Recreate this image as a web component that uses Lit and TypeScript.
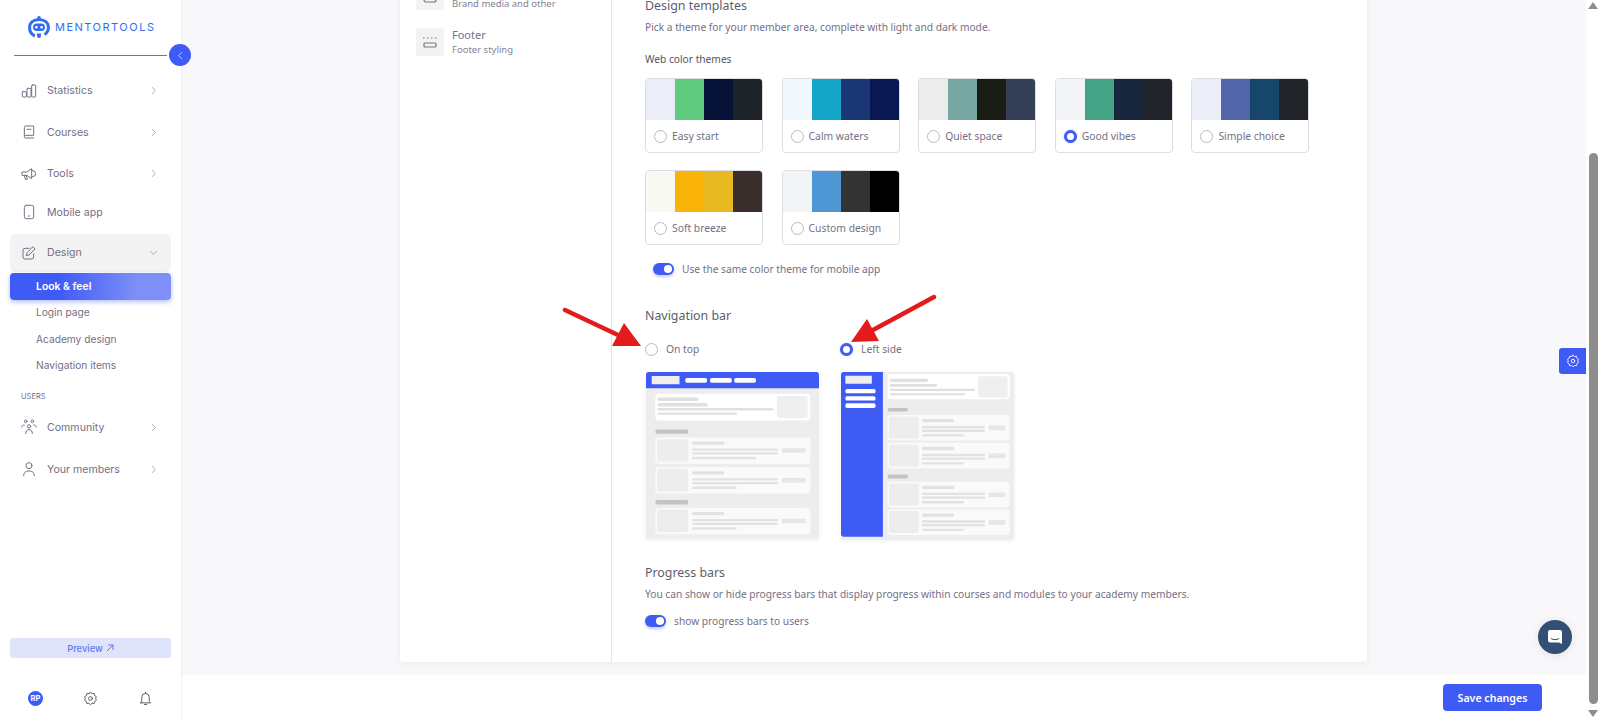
import {css, html, LitElement, svg} from 'lit';
import {customElement, state} from 'lit/decorators.js';
import {classMap} from 'lit/directives/class-map.js';

const THEMES = [
  {name: 'Easy start', colors: ['#ebeef7', '#5fcb7f', '#08133a', '#1f2429']},
  {name: 'Calm waters', colors: ['#f3f7fe', '#15a6ca', '#1a3675', '#091852']},
  {name: 'Quiet space', colors: ['#ececec', '#78a7a3', '#1a1d14', '#354058']},
  {name: 'Good vibes', colors: ['#f3f4f7', '#44a285', '#17263c', '#212529']},
  {name: 'Simple choice', colors: ['#ebeef7', '#5066a8', '#17466b', '#212529']},
  {name: 'Soft breeze', colors: ['#f8f9f3', '#f9b208', '#e8b923', '#3a2e2c']},
  {name: 'Custom design', colors: ['#f3f4f6', '#4f96d5', '#333333', '#000000']},
];

const icon = (body: unknown, size = 16) => html`<svg width=${size} height=${size} viewBox="0 0 24 24" fill="none" stroke="currentColor" stroke-width="1.5" stroke-linecap="round" stroke-linejoin="round">${body}</svg>`;

const ICONS = {
  stats: svg`<rect x="2" y="13" width="6" height="8" rx="1"/><rect x="9" y="8" width="6" height="13" rx="1"/><rect x="16" y="3" width="6" height="18" rx="1"/>`,
  book: svg`<path d="M5 18V5a2 2 0 0 1 2-2h12v14H7a2 2 0 0 0-2 2 2 2 0 0 0 2 2h12"/><path d="M9 8h6"/>`,
  megaphone: svg`<path d="M2 9h7l7-5v15l-7-5H2z"/><path d="M5 14l1.500 6h3L8 14"/><path d="M16 6l5 2.500 1 3-1 3-5 2"/>`,
  phone: svg`<rect x="5" y="2" width="14" height="20" rx="3"/><path d="M11 18h2"/>`,
  edit: svg`<path d="M12 5H6a3 3 0 0 0-3 3v10a3 3 0 0 0 3 3h10a3 3 0 0 0 3-3v-5"/><path d="M18 3l3 3-9 9-4 1 1-4z"/>`,
  community: svg`<circle cx="12" cy="11" r="2.500"/><path d="M7 22c0-4 2-6 5-6s5 2 5 6"/><circle cx="7" cy="3.500" r="2"/><circle cx="17" cy="3.500" r="2"/><path d="M1 12c0-2 2-3 4-3M23 12c0-2-2-3-4-3"/>`,
  user: svg`<circle cx="12" cy="7" r="4.500"/><path d="M4 22c0-5 3-7 8-7s8 2 8 7"/>`,
  gear: svg`<circle cx="12" cy="12" r="3"/><path d="M12 2l2.500 2.300 3.400-.3.800 3.300 2.800 2-1.400 2.700 1.400 2.700-2.800 2-.8 3.300-3.400-.3L12 22l-2.500-2.300-3.400.3-.8-3.300-2.800-2L3.900 12 2.500 9.300l2.800-2 .8-3.300 3.400.3z"/>`,
  bell: svg`<path d="M6 17V10a6 6 0 0 1 12 0v7l2 2H4z"/><path d="M10 21.500h4"/><path d="M12 2v2"/>`,
  right: svg`<path d="M9 5l7 7-7 7"/>`,
  down: svg`<path d="M5 9l7 7 7-7"/>`,
  left: svg`<path d="M15 5l-7 7 7 7"/>`,
};

// viewBox units are the 3x crop of the mock, which keeps the numbers easy to compare
const bar = (x1: number, x2: number, y1: number, y2: number, fill: string) =>
  svg`<rect x=${x1} y=${y1} width=${x2 - x1} height=${y2 - y1} rx=${Math.min(5, (y2 - y1) / 2)} fill=${fill}/>`;

const block = (x1: number, x2: number, y1: number, y2: number, fill: string, rx = 7) =>
  svg`<rect x=${x1} y=${y1} width=${x2 - x1} height=${y2 - y1} rx=${rx} fill=${fill}/>`;

const rowTop = (y: number, h: number, x1: number, x2: number, tx1: number, tx2: number, lx1: number, lx2: number, sx1: number, sx2: number, short: number) => svg`
  ${block(x1, x2, y, y + h, '#fafafa', 10)}
  ${block(tx1, tx2, y + 5, y + h - 6, '#ededed')}
  ${bar(lx1, lx1 + 97, y + 12, y + 22, '#e2e2e2')}
  ${bar(lx1, lx2, y + 33, y + 40, '#e2e2e2')}
  ${bar(lx1, lx2, y + 44, y + 51, '#e2e2e2')}
  ${bar(lx1, short, y + 58, y + 65, '#e2e2e2')}
  ${block(sx1, sx2, y + 32, y + 46, '#e6e6e6', 2)}
`;

const topPreview = html`<svg class="preview" width="173" height="167" viewBox="290 278 516 500" preserveAspectRatio="none">
  <rect x="290" y="278" width="516" height="500" rx="8" fill="#ededed"/>
  <path d="M290 327V286a8 8 0 0 1 8-8h500a8 8 0 0 1 8 8v41z" fill="#3f5bf6"/>
  ${block(307, 390, 290, 315, '#eeeeee', 2)}
  ${bar(407, 472, 296, 310, '#fff')}${bar(481, 546, 296, 310, '#fff')}${bar(553, 618, 296, 310, '#fff')}
  ${block(318, 780, 343, 423, '#ffffff', 10)}
  ${block(681, 772, 350, 416, '#efefef')}
  ${bar(324, 446, 354, 365, '#e0e0e0')}${bar(324, 474, 371, 381, '#e0e0e0')}
  ${bar(324, 670, 386, 393, '#e0e0e0')}${bar(324, 562, 399, 406, '#e0e0e0')}
  ${bar(318, 416, 450, 463, '#c4c4c4')}
  ${rowTop(474, 79, 318, 780, 323, 416, 427, 684, 695, 766, 619)}
  ${rowTop(563, 79, 318, 780, 323, 416, 427, 684, 695, 766, 560)}
  ${bar(318, 416, 661, 675, '#c4c4c4')}
  ${rowTop(685, 79, 318, 780, 323, 416, 427, 684, 695, 766, 560)}
</svg>`;

const sidePreview = html`<svg class="preview" width="173" height="168" viewBox="65 278 516 505" preserveAspectRatio="none">
  <rect x="65" y="278" width="516" height="505" rx="8" fill="#ededed"/>
  <path d="M190 773H73a8 8 0 0 1-8-8V286a8 8 0 0 1 8-8h117z" fill="#3f5bf6"/>
  ${block(78, 157, 289, 313, '#eeeeee', 2)}
  ${bar(78, 168, 329, 342, '#fff')}${bar(78, 168, 351, 364, '#fff')}${bar(78, 168, 372, 386, '#fff')}
  ${block(204, 568, 284, 360, '#ffffff', 10)}
  ${block(474, 562, 291, 355, '#efefef')}
  ${bar(210, 325, 298, 308, '#e0e0e0')}${bar(210, 352, 314, 322, '#e0e0e0')}
  ${bar(210, 465, 328, 335, '#e0e0e0')}${bar(210, 435, 342, 348, '#e0e0e0')}
  ${bar(204, 265, 386, 397, '#c4c4c4')}
  ${rowTop(407, 77, 204, 568, 208, 297, 306, 495, 505, 555, 432)}
  ${rowTop(491, 77, 204, 568, 208, 297, 306, 495, 505, 555, 432)}
  ${bar(204, 265, 586, 598, '#c4c4c4')}
  ${rowTop(608, 77, 204, 568, 208, 297, 306, 495, 505, 555, 432)}
  ${rowTop(691, 77, 204, 568, 208, 297, 306, 495, 505, 555, 432)}
</svg>`;

@customElement('app-root')
export class AppRoot extends LitElement {
  @state() private theme = 'Good vibes';
  @state() private nav = 'left';

  static override styles = css`
    :host {
      display: flex;
      width: 1600px;
      height: 718px;
      overflow: hidden;
      position: relative;
      background: #f8f8fb;
      font-family: 'Noto Sans', sans-serif;
      color: #737085;
    }
    .sidebar {
      width: 182px;
      box-sizing: border-box;
      flex: none;
      background: #fff;
      border-right: 1px solid #f0f0f4;
      display: flex;
      flex-direction: column;
      font-family: Inter, sans-serif;
      font-size: 10.6px;
      color: #737085;
    }
    .logo {
      height: 55px;
      margin: 0 14px;
      padding-left: 14px;
      border-bottom: 1px solid #77757f;
      display: flex;
      align-items: flex-start;
      position: relative;
    }
    .logo-mark { margin-top: 16px; flex: none; }
    .logo-text {
      margin: 20px 0 0 5px;
      font-size: 11px;
      font-weight: 400;
      letter-spacing: 1.5px;
      line-height: 14px;
      color: #2f6ef0;
    }
    .collapse {
      position: absolute;
      right: -24px;
      top: 44px;
      width: 22px;
      height: 22px;
      border-radius: 50%;
      background: #3f5bf6;
      color: #fff;
      display: flex;
      align-items: center;
      justify-content: center;
      z-index: 2;
    }
    .menu { padding: 14px 10px 0; display: flex; flex-direction: column; flex: 1; }
    .item {
      height: 41.5px;
      display: flex;
      align-items: center;
      padding: 0 12px 0 11px;
      gap: 10px;
      flex: none;
    }
    .item .label { flex: 1; }
    .item .chev { color: #8b8a98; display: flex; }
    .item.short { height: 35px; }
    .item.open { background: #f3f3f3; border-radius: 5px; height: 38.5px; margin-top: 4px; }
    .sub-active {
      margin-top: 1px;
      height: 26.5px;
      border-radius: 4px;
      background: linear-gradient(90deg, #3f5bf6 30%, #7e90f8 80%);
      box-shadow: 0 2px 5px rgba(63, 91, 246, 0.4);
      color: #fff;
      font-weight: 600;
      font-size: 10.4px;
      display: flex;
      align-items: center;
      padding-left: 26px;
    }
    .sub {
      height: 26.7px;
      display: flex;
      align-items: center;
      padding-left: 26px;
      font-size: 10.2px;
    }
    .sub-active + .sub { margin-top: -1px; }
    .group {
      font-size: 7.5px;
      padding-left: 11px;
      margin-top: 10px;
      margin-bottom: 2px;
      line-height: 16px;
    }
    .item.community { margin-bottom: 0.5px; }
    .preview-btn {
      margin-top: auto;
      height: 20px;
      border-radius: 3px;
      background: #e0e4fb;
      color: #6177f0;
      font-weight: 500;
      font-size: 9.4px;
      display: flex;
      align-items: center;
      justify-content: center;
      gap: 3px;
    }
    .tools {
      height: 60px;
      box-sizing: border-box;
      padding: 20px 28px 0;
      display: flex;
      align-items: center;
      justify-content: space-between;
      color: #55535f;
    }
    .tools svg { display: block; }
    .avatar {
      width: 15px;
      height: 15px;
      border-radius: 50%;
      background: #3f5bf6;
      color: #fff;
      font-size: 7.5px;
      font-weight: 700;
      display: flex;
      align-items: center;
      justify-content: center;
    }
    .main { flex: 1; display: flex; flex-direction: column; min-width: 0; }
    .scroll { flex: 1; overflow: hidden; }
    .footer {
      height: 43px;
      flex: none;
      background: #fff;
      display: flex;
      align-items: center;
      justify-content: flex-end;
      padding-right: 44px;
      padding-top: 2px;
      box-sizing: border-box;
    }
    .save {
      width: 99px;
      height: 27px;
      border-radius: 4px;
      background: #3f5bf6;
      color: #fff;
      font-size: 10.6px;
      font-weight: 600;
      display: flex;
      align-items: center;
      justify-content: center;
    }
    .card {
      width: 967px;
      margin: -30px 0 0 218px;
      background: #fff;
      border-radius: 4px;
      box-shadow: 0 1px 6px rgba(60, 60, 90, 0.08);
      display: flex;
    }
    .left {
      flex: none;
      border-right: 1px solid #e6e6ea;
      padding: 12px 0 0 16px;
      width: 195px;
    }
    .nav-item { display: flex; gap: 8px; height: 28px; margin-bottom: 18px; }
    .tile {
      width: 28px;
      height: 28px;
      border-radius: 3px;
      background: #f3f3f3;
      color: #77757f;
      display: flex;
      align-items: center;
      justify-content: center;
      flex: none;
    }
    .nav-name { font-size: 11px; line-height: 14px; }
    .nav-sub { font-size: 9.5px; line-height: 14px; margin-top: 1px; color: #85838f; }
    .right { flex: 1; padding: 27px 0 34px 33px; }
    h2 {
      margin: 0;
      font-size: 12.4px;
      font-weight: 400;
      line-height: 18px;
      color: #5f5d6d;
    }
    p { margin: 4px 0 0; font-size: 10.2px; line-height: 16px; color: #737085; }
    .sub-title { margin-top: 16px; font-size: 10.2px; line-height: 16px; color: #55535f; }
    .themes {
      display: grid;
      grid-template-columns: repeat(5, 118px);
      column-gap: 18.6px;
      row-gap: 17px;
      margin-top: 11px;
    }
    .theme {
      height: 75px;
      box-sizing: border-box;
      border: 1px solid #dedee2;
      border-radius: 4px;
      overflow: hidden;
      cursor: pointer;
    }
    .swatches { display: flex; height: 41px; }
    .swatches span { flex: 1; }
    .theme-label {
      display: flex;
      align-items: center;
      gap: 5px;
      height: 32px;
      padding-left: 8px;
      font-size: 10.3px;
    }
    .radio {
      width: 13px;
      height: 13px;
      box-sizing: border-box;
      border-radius: 50%;
      border: 1px solid #b9b9c0;
      background: #fff;
      flex: none;
    }
    .radio.on { border: 3.5px solid #3f5bf6; box-shadow: 0 0 2px rgba(63, 91, 246, 0.4); }
    .toggle-row {
      display: flex;
      align-items: center;
      gap: 8px;
      font-size: 10.2px;
      height: 14px;
    }
    .toggle {
      width: 21px;
      height: 12px;
      border-radius: 6px;
      background: #3f5bf6;
      box-shadow: 0 2px 3px rgba(63, 91, 246, 0.3);
      position: relative;
      flex: none;
    }
    .toggle::after {
      content: '';
      position: absolute;
      right: 2px;
      top: 2px;
      width: 8px;
      height: 8px;
      border-radius: 50%;
      background: #fff;
    }
    .same { margin: 17px 0 0 8px; }
    .nav-title { margin-top: 31px; }
    .nav-options { display: flex; margin-top: 16px; gap: 23px; }
    .nav-option { width: 172px; cursor: pointer; }
    .nav-head {
      display: flex;
      align-items: center;
      gap: 8px;
      font-size: 10.3px;
      height: 16px;
      margin-bottom: 15px;
    }
    .preview { display: block; margin-left: 1px; filter: drop-shadow(0 1px 2px rgba(0, 0, 0, 0.06)); }
    .progress-title { margin-top: 24px; }
    .progress-row { margin: 12px 0 0; }
    .bar-track {
      width: 14px;
      flex: none;
      background: #fff;
      display: flex;
      flex-direction: column;
      align-items: center;
    }
    .bar-gap { height: 142px; flex: none; }
    .bar-thumb { width: 9px; flex: 1; background: #8d8d8d; border-radius: 5px; }
    .arrow-up, .arrow-down {
      width: 0;
      height: 0;
      border-left: 5px solid transparent;
      border-right: 5px solid transparent;
      margin: 2px 0;
    }
    .arrow-up { border-bottom: 7px solid #8d8d8d; }
    .arrow-down { border-top: 7px solid #8d8d8d; margin: 6px 0 1px; }
    .gear-tab {
      position: absolute;
      left: 1559px;
      top: 348px;
      width: 27px;
      height: 26px;
      border-radius: 3px 0 0 3px;
      background: #3f5bf6;
      color: #fff;
      display: flex;
      align-items: center;
      justify-content: center;
    }
    .chat {
      position: absolute;
      left: 1538px;
      top: 620px;
      width: 34px;
      height: 34px;
      border-radius: 50%;
      background: #334f75;
      box-shadow: 0 1px 8px rgba(0, 0, 0, 0.1);
      display: flex;
      align-items: center;
      justify-content: center;
    }
    .arrows { position: absolute; left: 0; top: 0; pointer-events: none; }
  `;

  private renderTheme(t: {name: string; colors: string[]}) {
    return html`<div class="theme" @click=${() => (this.theme = t.name)}>
      <div class="swatches">${t.colors.map(c => html`<span style="background:${c}"></span>`)}</div>
      <div class="theme-label">
        <span class=${classMap({radio: true, on: this.theme === t.name})}></span>${t.name}
      </div>
    </div>`;
  }

  private renderSidebar() {
    const chev = html`<span class="chev">${icon(ICONS.right, 11)}</span>`;
    return html`<aside class="sidebar">
      <div class="logo">
        <svg class="logo-mark" width="22" height="22" viewBox="0 0 22 22">
          <path d="M6 19.500C3 18 1.600 15 1.600 11.500 1.600 6.500 5.500 3.400 11 3.400s9.400 3.100 9.400 8.100c0 3-1.400 5.500-3.900 7" fill="none" stroke="#2f6ef0" stroke-width="3"/>
          <rect x="9.200" y="0" width="3.600" height="5" rx="1.800" fill="#2f6ef0"/>
          <rect x="5" y="7.500" width="12" height="7.500" rx="3.700" fill="#2f6ef0"/>
          <circle cx="8.400" cy="11.200" r="1.300" fill="#fff"/><circle cx="13.600" cy="11.200" r="1.300" fill="#fff"/>
          <path d="M3 17l3 5 1.500-3.500z" fill="#2f6ef0"/>
          <path d="M9 17.500h4v2.500a2 2 0 0 1-4 0z" fill="#2f6ef0"/>
        </svg>
        <span class="logo-text">MENTORTOOLS</span>
        <span class="collapse">${icon(ICONS.left, 11)}</span>
      </div>
      <nav class="menu">
        <div class="item">${icon(ICONS.stats)}<span class="label">Statistics</span>${chev}</div>
        <div class="item">${icon(ICONS.book)}<span class="label">Courses</span>${chev}</div>
        <div class="item">${icon(ICONS.megaphone)}<span class="label">Tools</span>${chev}</div>
        <div class="item short">${icon(ICONS.phone)}<span class="label">Mobile app</span></div>
        <div class="item open">${icon(ICONS.edit)}<span class="label">Design</span><span class="chev">${icon(ICONS.down, 11)}</span></div>
        <div class="sub-active">Look &amp; feel</div>
        <div class="sub">Login page</div>
        <div class="sub">Academy design</div>
        <div class="sub">Navigation items</div>
        <div class="group">USERS</div>
        <div class="item community">${icon(ICONS.community)}<span class="label">Community</span>${chev}</div>
        <div class="item">${icon(ICONS.user)}<span class="label">Your members</span>${chev}</div>
        <div class="preview-btn">Preview
          <svg width="8" height="8" viewBox="0 0 8 8" fill="none" stroke="currentColor" stroke-width="1"><path d="M1 7l6-6M2 1h5v5"/></svg>
        </div>
      </nav>
      <div class="tools">
        <span class="avatar">RP</span>
        ${icon(ICONS.gear, 15)}
        ${icon(ICONS.bell, 15)}
      </div>
    </aside>`;
  }

  override render() {
    return html`
      ${this.renderSidebar()}
      <div class="main">
        <div class="scroll">
          <section class="card">
            <div class="left">
              <div class="nav-item">
                <span class="tile">
                  <svg width="16" height="16" viewBox="0 0 16 16" fill="none" stroke="currentColor" stroke-width="1.200">
                    <rect x="2" y="2" width="12" height="12" rx="2"/>
                  </svg>
                </span>
                <div><div class="nav-name">Brand</div><div class="nav-sub">Brand media and other</div></div>
              </div>
              <div class="nav-item">
                <span class="tile">
                  <svg width="16" height="16" viewBox="0 0 16 16" fill="none" stroke="currentColor" stroke-width="1.200">
                    <path d="M1 4h14" stroke-dasharray="1.500 2.500"/><rect x="2" y="9" width="12" height="4" rx="1"/>
                  </svg>
                </span>
                <div><div class="nav-name">Footer</div><div class="nav-sub">Footer styling</div></div>
              </div>
            </div>
            <div class="right">
              <h2>Design templates</h2>
              <p>Pick a theme for your member area, complete with light and dark mode.</p>
              <div class="sub-title">Web color themes</div>
              <div class="themes">${THEMES.map(t => this.renderTheme(t))}</div>
              <div class="toggle-row same"><span class="toggle"></span>Use the same color theme for mobile app</div>
              <h2 class="nav-title">Navigation bar</h2>
              <div class="nav-options">
                <div class="nav-option" @click=${() => (this.nav = 'top')}>
                  <div class="nav-head"><span class=${classMap({radio: true, on: this.nav === 'top'})}></span>On top</div>
                  ${topPreview}
                </div>
                <div class="nav-option" @click=${() => (this.nav = 'left')}>
                  <div class="nav-head"><span class=${classMap({radio: true, on: this.nav === 'left'})}></span>Left side</div>
                  ${sidePreview}
                </div>
              </div>
              <h2 class="progress-title">Progress bars</h2>
              <p>You can show or hide progress bars that display progress within courses and modules to your academy members.</p>
              <div class="toggle-row progress-row"><span class="toggle"></span>show progress bars to users</div>
            </div>
          </section>
        </div>
        <div class="footer"><div class="save">Save changes</div></div>
      </div>
      <div class="bar-track">
        <span class="arrow-up"></span>
        <div class="bar-gap"></div>
        <div class="bar-thumb"></div>
        <span class="arrow-down"></span>
      </div>
      <div class="gear-tab">${icon(ICONS.gear, 14)}</div>
      <div class="chat">
        <svg width="18" height="18" viewBox="0 0 18 18">
          <path d="M4 2h10a2 2 0 0 1 2 2v12l-3-1.500H4a2 2 0 0 1-2-2V4a2 2 0 0 1 2-2z" fill="#fff"/>
          <path d="M5 10.500c2.500 1.500 5.500 1.500 8 0" fill="none" stroke="#334f75" stroke-width="1"/>
        </svg>
      </div>
      <svg class="arrows" width="1600" height="718">
        <path d="M565 310L618 335M934 297L873 330" stroke="#e41b1b" stroke-width="4.500" stroke-linecap="round"/>
        <path d="M641 346L612 346L624 323zM851 342L867 319L879 341z" fill="#e41b1b"/>
      </svg>
    `;
  }
}
